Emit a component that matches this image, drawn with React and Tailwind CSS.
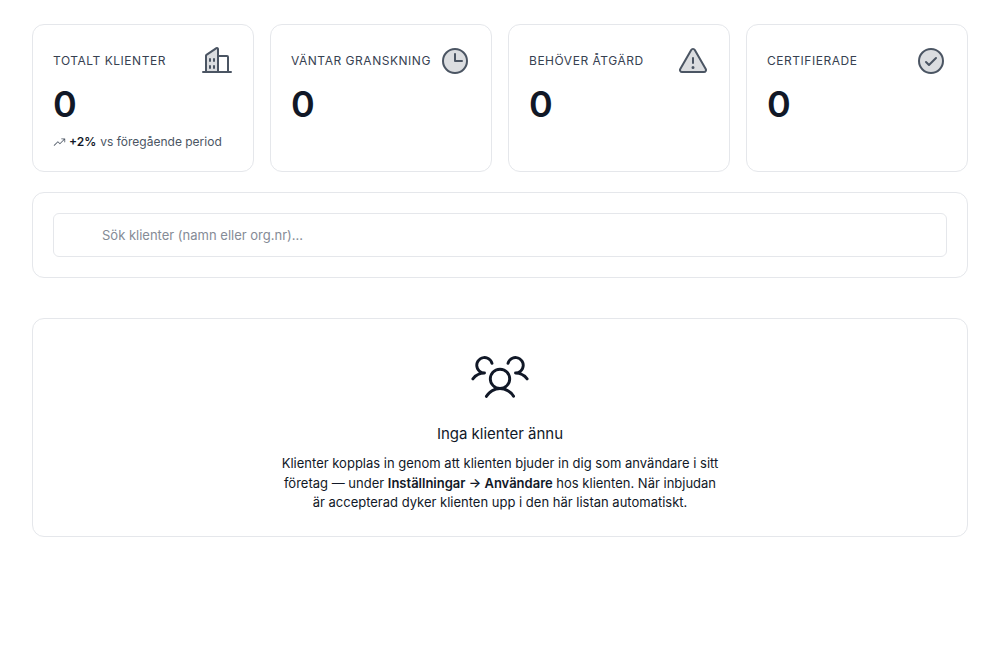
import React from "react";
import {
  PiBuildingsDuotone,
  PiClockDuotone,
  PiWarningDuotone,
  PiCheckCircleDuotone,
  PiTrendUp,
  PiUsersThreeLight,
} from "react-icons/pi";

const stats = [
  { label: "TOTALT KLIENTER", Icon: PiBuildingsDuotone, trend: true },
  { label: "VÄNTAR GRANSKNING", Icon: PiClockDuotone },
  { label: "BEHÖVER ÅTGÄRD", Icon: PiWarningDuotone },
  { label: "CERTIFIERADE", Icon: PiCheckCircleDuotone },
];

const StatCard = ({ label, Icon, trend }) => (
  <div className="h-[148px] rounded-xl border border-[#e5e7eb] bg-white pl-5 pr-5 pt-5">
    <div className="flex h-8 items-center justify-between">
      <span className="text-xs font-normal tracking-[0.53px] text-[#374151]">{label}</span>
      <Icon className="text-[32px] text-[#4b5563]" />
    </div>
    <div className="mt-[7px] text-[36px] leading-[40px] font-semibold text-[#111827]">0</div>
    {trend && (
      <div className="mt-[10px] flex items-center gap-[3px] text-xs text-[#4b5563]">
        <PiTrendUp className="text-[13px]" />
        <span className="font-semibold text-[#111827]">+2%</span>
        <span className="ml-px">vs föregående period</span>
      </div>
    )}
  </div>
);

export default function App() {
  return (
    <div className="min-h-[664px] bg-white px-8 pt-6 font-['Inter',sans-serif]">
      <div className="grid grid-cols-4 gap-4">
        {stats.map((s) => (
          <StatCard key={s.label} {...s} />
        ))}
      </div>

      <div className="mt-5 rounded-xl border border-[#e5e7eb] bg-white p-5">
        <input
          type="text"
          placeholder="Sök klienter (namn eller org.nr)..."
          className="h-11 w-full rounded-md border border-[#e5e7eb] bg-white pl-12 pr-4 text-[13px] text-[#111827] outline-none placeholder:text-[#858b96]"
        />
      </div>

      <div className="mt-10 flex h-[219px] flex-col items-center rounded-xl border border-[#e5e7eb] bg-white pt-[25px]">
        <PiUsersThreeLight className="text-[62px] text-[#111827]" />
        <h3 className="mt-[18px] text-[15px] leading-5 font-normal text-[#111827]">Inga klienter ännu</h3>
        <p className="mt-[10px] w-[442px] text-center text-[13px] leading-[19.5px] text-[#111827]">
          Klienter kopplas in genom att klienten bjuder in dig som användare i sitt företag — under{" "}
          <strong className="font-semibold">Inställningar → Användare</strong> hos klienten. När inbjudan är accepterad dyker klienten upp i den här listan automatiskt.
        </p>
      </div>
    </div>
  );
}
